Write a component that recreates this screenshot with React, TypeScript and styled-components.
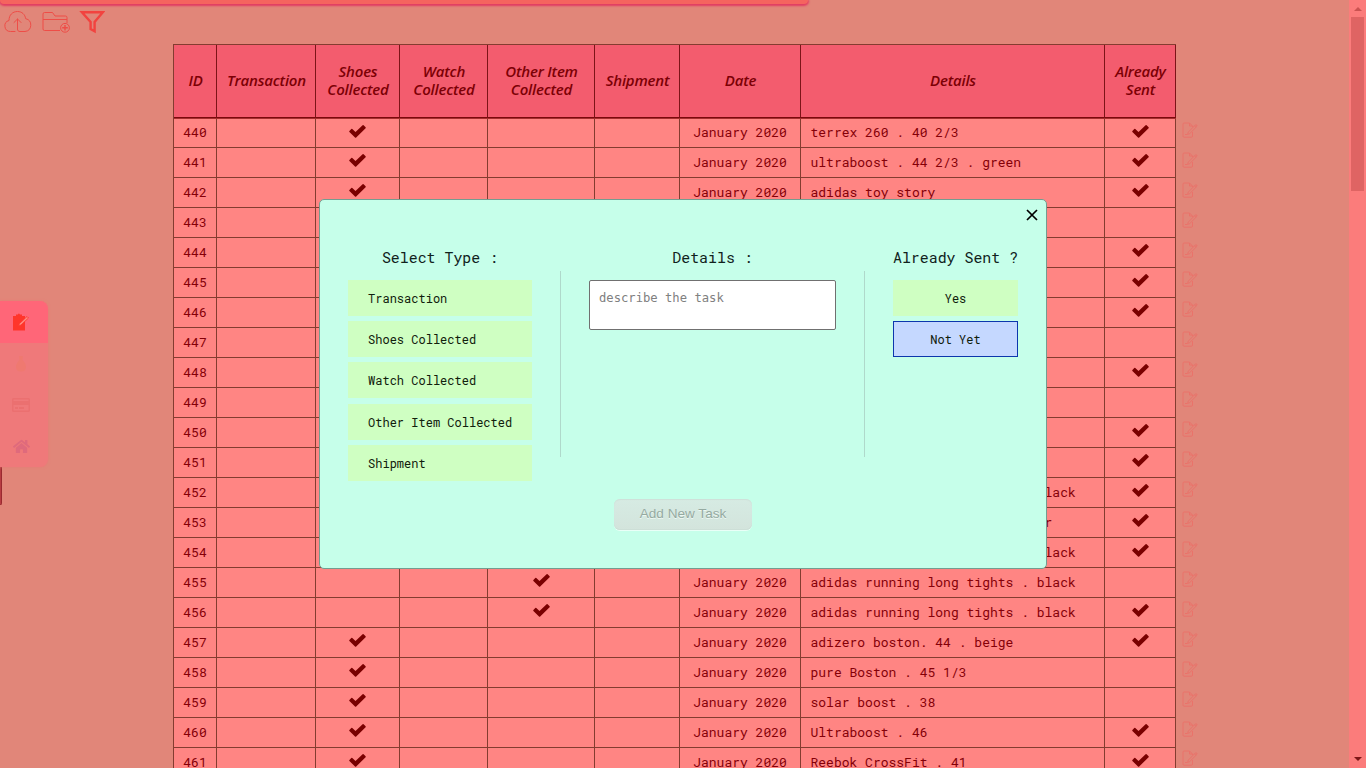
import React from "react";
import styled, { createGlobalStyle, css } from "styled-components";
import { FaHome, FaRegCreditCard } from "react-icons/fa";

const mono = `"Roboto Mono", "Liberation Mono", monospace`;

const GlobalStyle = createGlobalStyle`
  * { box-sizing: border-box; }
  html, body { margin: 0; height: 768px; overflow: hidden; }
`;

const Page = styled.div`
  display: flex;
  height: 768px;
  overflow: hidden;
  background: #e18679;
  position: relative;
`;
const Main = styled.main`
  flex: 1;
  min-width: 0;
  display: flex;
  flex-direction: column;
`;
const Progress = styled.div`
  flex: none;
  width: 808px;
  height: 4px;
  background: #f5645f;
  border-radius: 0 0 7px 7px;
  box-shadow: 0 1px 2px 1px #e23c62;
`;
const Toolbar = styled.div`
  flex: none;
  height: 40px;
  padding: 6px 0 0 4px;
  display: flex;
  align-items: flex-start;
  gap: 9.5px;
  color: #ee4d47;
`;

const TableRegion = styled.section`
  display: flex;
  align-items: flex-start;
  padding-left: 173px;
  gap: 6px;
`;
const Table = styled.div`
  flex: none;
  width: 1003px;
  border-top: 1px solid #843c30;
  border-left: 1px solid #843c30;
`;
const columns = "43px 99px 84px 88px 107px 85px 121px 304px 71px";
const HeadRow = styled.div`
  display: grid;
  grid-template-columns: ${columns};
  height: 74px;
  background: #f35c6e;
  border-bottom: 1px solid #a82e30;
`;
const HeadCell = styled.div`
  display: flex;
  align-items: center;
  justify-content: center;
  text-align: center;
  white-space: pre-line;
  padding: 0 0 2px 1px;
  border-right: 1px solid #7c1418;
  border-bottom: 1px solid #7a0a0c;
  font: italic 600 15px/18px "Open Sans", sans-serif;
  letter-spacing: -0.2px;
  color: #7c0005;
`;
const Row = styled.div`
  display: grid;
  grid-template-columns: ${columns};
  height: 30px;
  background: #ff8583;
  &:nth-child(2) { height: 29px; }
`;
const Cell = styled.div<{ $left?: boolean }>`
  display: flex;
  align-items: center;
  justify-content: ${(p) => (p.$left ? "flex-start" : "center")};
  padding: 0 0 2px ${(p) => (p.$left ? "9.5px" : "0")};
  border-right: 1px solid #843c30;
  border-bottom: 1px solid #843c30;
  font: 13px/18px ${mono};
  color: #850008;
  white-space: pre;
`;
const CheckSvg = styled.svg`
  width: 17px;
  height: 13px;
  margin-bottom: 1.4px;
  fill: #7a0000;
`;
const EditColumn = styled.div`
  display: flex;
  flex-direction: column;
  gap: 13.95px;
  padding-top: 77.8px;
  color: #ea726a;
  svg { display: block; flex: none; }
`;

const Scrollbar = styled.aside`
  width: 17px;
  background: #fb7c7b;
  display: flex;
  flex-direction: column;
  align-items: center;
  justify-content: space-between;
  padding: 7px 0;
`;
const Thumb = styled.div`
  width: 13px;
  height: 174px;
  margin: 6px 0 auto;
  background: #df6463;
`;
const Arrow = styled.i<{ $down?: boolean }>`
  border: 4px solid transparent;
  ${(p) =>
    p.$down
      ? css`border-top-color: #7d1717; border-bottom: 0;`
      : css`border-bottom-color: #cb5251; border-top: 0;`}
`;

const SideMenu = styled.nav`
  position: absolute;
  left: 0;
  top: 301px;
  width: 48px;
  height: 166px;
  display: grid;
  grid-template-rows: 42px repeat(3, 1fr);
  background: #ef797a;
  border-radius: 0 8px 8px 0;
  overflow: hidden;
  box-shadow: 0 0 3px #e87a76;
`;
const SideItem = styled.div<{ $active?: boolean; $color: string }>`
  display: flex;
  align-items: center;
  justify-content: center;
  padding-right: 6px;
  color: ${(p) => p.$color};
  background: ${(p) => (p.$active ? "#ff6678" : "transparent")};
`;
const SideTab = styled.div`
  position: absolute;
  left: 0;
  top: 466px;
  width: 2px;
  height: 39px;
  background: #b83c42;
  border-right: 1px solid #9a2a30;
  border-bottom: 1px solid #9a2a30;
  border-radius: 0 0 2px 0;
`;

const Overlay = styled.div`
  position: absolute;
  inset: 0;
  display: flex;
  align-items: center;
  justify-content: center;
`;
const Modal = styled.div`
  position: relative;
  width: 728px;
  height: 370px;
  padding: 0 28px;
  display: flex;
  flex-direction: column;
  align-items: center;
  background: #c6ffea;
  border: 1px solid #739d90;
  border-radius: 5px;
`;
const Close = styled.button`
  position: absolute;
  right: 8px;
  top: 8.5px;
  padding: 0;
  border: 0;
  background: none;
  line-height: 0;
`;
const Columns = styled.div`
  width: 100%;
  height: 299px;
  padding-top: 47px;
  display: grid;
  grid-template-columns: 184px 1px 247px 1px 125px;
  column-gap: 28px;
`;
const Column = styled.div`
  display: flex;
  flex-direction: column;
`;
const Divider = styled.div`
  margin-top: 24px;
  height: 186px;
  background: #afd9cb;
`;
const Title = styled.h2`
  margin: 0 0 13px;
  font: 400 14.9px/20px ${mono};
  text-align: center;
  white-space: pre;
  color: #10221c;
`;
const Option = styled.button<{ $selected?: boolean; $center?: boolean }>`
  flex: none;
  height: 36px;
  margin: 0 0 5.2px;
  padding: 0 ${(p) => (p.$center ? "0" : "19px")};
  text-align: ${(p) => (p.$center ? "center" : "left")};
  font: 12.03px/16px ${mono};
  white-space: pre;
  color: #10200c;
  border: 1px solid ${(p) => (p.$selected ? "#0c36ad" : "transparent")};
  background: ${(p) => (p.$selected ? "#c5d8ff" : "#cfffc2")};
`;
const Input = styled.textarea`
  width: 247px;
  height: 50px;
  padding: 9px;
  resize: none;
  border: 1px solid #707070;
  border-radius: 2px;
  background: #fff;
  font: 12.2px/17px "DejaVu Sans Mono", monospace;
  &::placeholder { color: #808080; opacity: 1; }
`;
const Submit = styled.button`
  width: 138px;
  height: 31px;
  padding: 0 0 2px;
  border: 0;
  border-radius: 6px;
  font: 13.6px/16px "Liberation Sans", Arial, sans-serif;
  color: #95aaa1;
  text-shadow: 0 1px 0 #eef8f4;
  background: linear-gradient(#d6ebe3, #d3e4dc);
  box-shadow: inset 0 1px 1px #cfe0d9, inset 0 -1px 0 #cddfd7, 0 1px 0 #e9fff7;
`;

const Check = () => (
  <CheckSvg viewBox="0 0 17 13">
    <path d="M.4 6 2.3 4q.5-.5 1 0l3.2 3L13.6.3q.5-.4 1 0l2 2q.4.4 0 .9L7.2 12.5q-.6.6-1.2 0L.4 7Q0 6.5.4 6Z" />
  </CheckSvg>
);
const EditIcon = () => (
  <svg width="16" height="16" viewBox="0 0 16 16" fill="none" stroke="currentColor" strokeWidth="1">
    <path d="M10.5 10v4.3q0 .9-.9.9H2Q1 15.200 1 14.200V2Q1 1 2 1h5.500L10.500 4v1M7.500 1v3h2.500" />
    <path d="m5.500 12.500.8-2.400 6.200-6.300 1.500 1.500-6.300 6.300ZM12.500 3.800l.8-.8q.7-.7 1.400 0 .6.7-.1 1.400l-.7.8M3 12.500h2" />
  </svg>
);

interface Item {
  id: number;
  type?: number;
  details: string;
  sent: boolean;
}
const tights = "adidas running long tights . black";
const items: Item[] = [
  { id: 440, type: 1, details: "terrex 260 . 40 2/3", sent: true },
  { id: 441, type: 1, details: "ultraboost . 44 2/3 . green", sent: true },
  { id: 442, type: 1, details: "adidas toy story", sent: true },
  { id: 443, details: "", sent: false },
  { id: 444, details: "", sent: true },
  { id: 445, details: "", sent: true },
  { id: 446, details: "", sent: true },
  { id: 447, details: "", sent: false },
  { id: 448, details: "", sent: true },
  { id: 449, details: "", sent: false },
  { id: 450, details: "", sent: true },
  { id: 451, details: "", sent: true },
  { id: 452, type: 3, details: tights, sent: true },
  { id: 453, type: 3, details: "adidas running jacket . M color", sent: true },
  { id: 454, type: 3, details: tights, sent: true },
  { id: 455, type: 3, details: tights, sent: false },
  { id: 456, type: 3, details: tights, sent: true },
  { id: 457, type: 1, details: "adizero boston. 44 . beige", sent: true },
  { id: 458, type: 1, details: "pure Boston . 45 1/3", sent: false },
  { id: 459, type: 1, details: "solar boost . 38", sent: false },
  { id: 460, type: 1, details: "Ultraboost . 46", sent: true },
  { id: 461, type: 1, details: "Reebok CrossFit . 41", sent: true },
];
const heads = [
  "ID", "Transaction", "Shoes\nCollected", "Watch\nCollected", "Other Item\nCollected",
  "Shipment", "Date", "Details", "Already\nSent",
];
const types = ["Transaction", "Shoes Collected", "Watch Collected", "Other Item Collected", "Shipment"];

export default function App() {
  return (
    <>
      <GlobalStyle />
      <Page>
        <Main>
          <Progress />
          <Toolbar>
            <svg width="28" height="24" viewBox="0 0 28 24" fill="none" stroke="currentColor" strokeLinecap="round">
              <path d="M11 21.500H6.500A5.600 5.600 0 0 1 5 10.500C5 5 8.500 1.500 13.500 1.500c4.500 0 7.500 3 8.200 7.200a6.500 6.500 0 0 1-.7 12.800H16c-1.800 0-2.500-1-2.500-2.500V9M10 12.500 13.500 9l3.500 3.500" />
            </svg>
            <svg width="28" height="24" viewBox="0 0 28 24" fill="none" stroke="currentColor">
              <path d="M18 20.500H2.500Q1 20.500 1 19V4q0-1.500 1.500-1.500h8L13 6h10.500q1.500 0 1.500 1.500V13M1 9.500h24" />
              <circle cx="23" cy="17.800" r="4.400" />
              <path strokeWidth="1.400" d="M23 15v5.600M20.200 17.800h5.600" />
            </svg>
            <svg width="26" height="24" viewBox="0 0 26 24" fill="none" stroke="#f2433f" strokeWidth="2.400">
              <path d="M2.900 2.200h21L15.600 12v9.200l-4-2.200v-7Z" />
            </svg>
          </Toolbar>
          <TableRegion>
            <Table>
              <HeadRow>
                {heads.map((h) => <HeadCell key={h}>{h}</HeadCell>)}
              </HeadRow>
              {items.map((item) => (
                <Row key={item.id}>
                  <Cell>{item.id}</Cell>
                  {types.map((t, i) => <Cell key={t}>{item.type === i && <Check />}</Cell>)}
                  <Cell>January 2020</Cell>
                  <Cell $left>{item.details}</Cell>
                  <Cell>{item.sent && <Check />}</Cell>
                </Row>
              ))}
            </Table>
            <EditColumn>
              {items.map((item) => <EditIcon key={item.id} />)}
            </EditColumn>
          </TableRegion>
        </Main>
        <Scrollbar>
          <Arrow />
          <Thumb />
          <Arrow $down />
        </Scrollbar>
        <SideTab />
        <SideMenu>
          <SideItem $active $color="#ff352b">
            <svg width="18" height="18" viewBox="0 0 18 18">
              <path fill="currentColor" d="M1 3h3V1.500h2Q6.700-.5 8 1.500h2V3h3v14.500H1Z" />
              <path d="m6.500 13 1-2.500 7.500-7 1.500 1.500L9 12Z" stroke="#ff352b" strokeWidth=".8" fill="#ff8a80" />
            </svg>
          </SideItem>
          <SideItem $color="#ef7970">
            <svg width="12" height="18" viewBox="0 0 12 18" fill="currentColor">
              <path d="M4.500 5 4 1h4l-.5 4c2 2 3.500 4 3.500 7 0 3-2 4.500-5 4.500S1 15 1 12c0-3 1.500-5 3.500-7Z" />
            </svg>
          </SideItem>
          <SideItem $color="#eb7070"><FaRegCreditCard size={18} /></SideItem>
          <SideItem $color="#df6a7c"><FaHome size={17} /></SideItem>
        </SideMenu>
        <Overlay>
          <Modal>
            <Close aria-label="Close">
              <svg width="12" height="12" viewBox="0 0 12 12" stroke="#000" strokeWidth="1.700">
                <path d="m1 1 10 10M11 1 1 11" />
              </svg>
            </Close>
            <Columns>
              <Column>
                <Title>Select Type :</Title>
                {types.map((t) => <Option key={t}>{t}</Option>)}
              </Column>
              <Divider />
              <Column>
                <Title>Details :</Title>
                <Input placeholder="describe the task" />
              </Column>
              <Divider />
              <Column>
                <Title>Already Sent ?</Title>
                <Option $center>Yes</Option>
                <Option $center $selected>Not Yet</Option>
              </Column>
            </Columns>
            <Submit disabled>Add New Task</Submit>
          </Modal>
        </Overlay>
      </Page>
    </>
  );
}
